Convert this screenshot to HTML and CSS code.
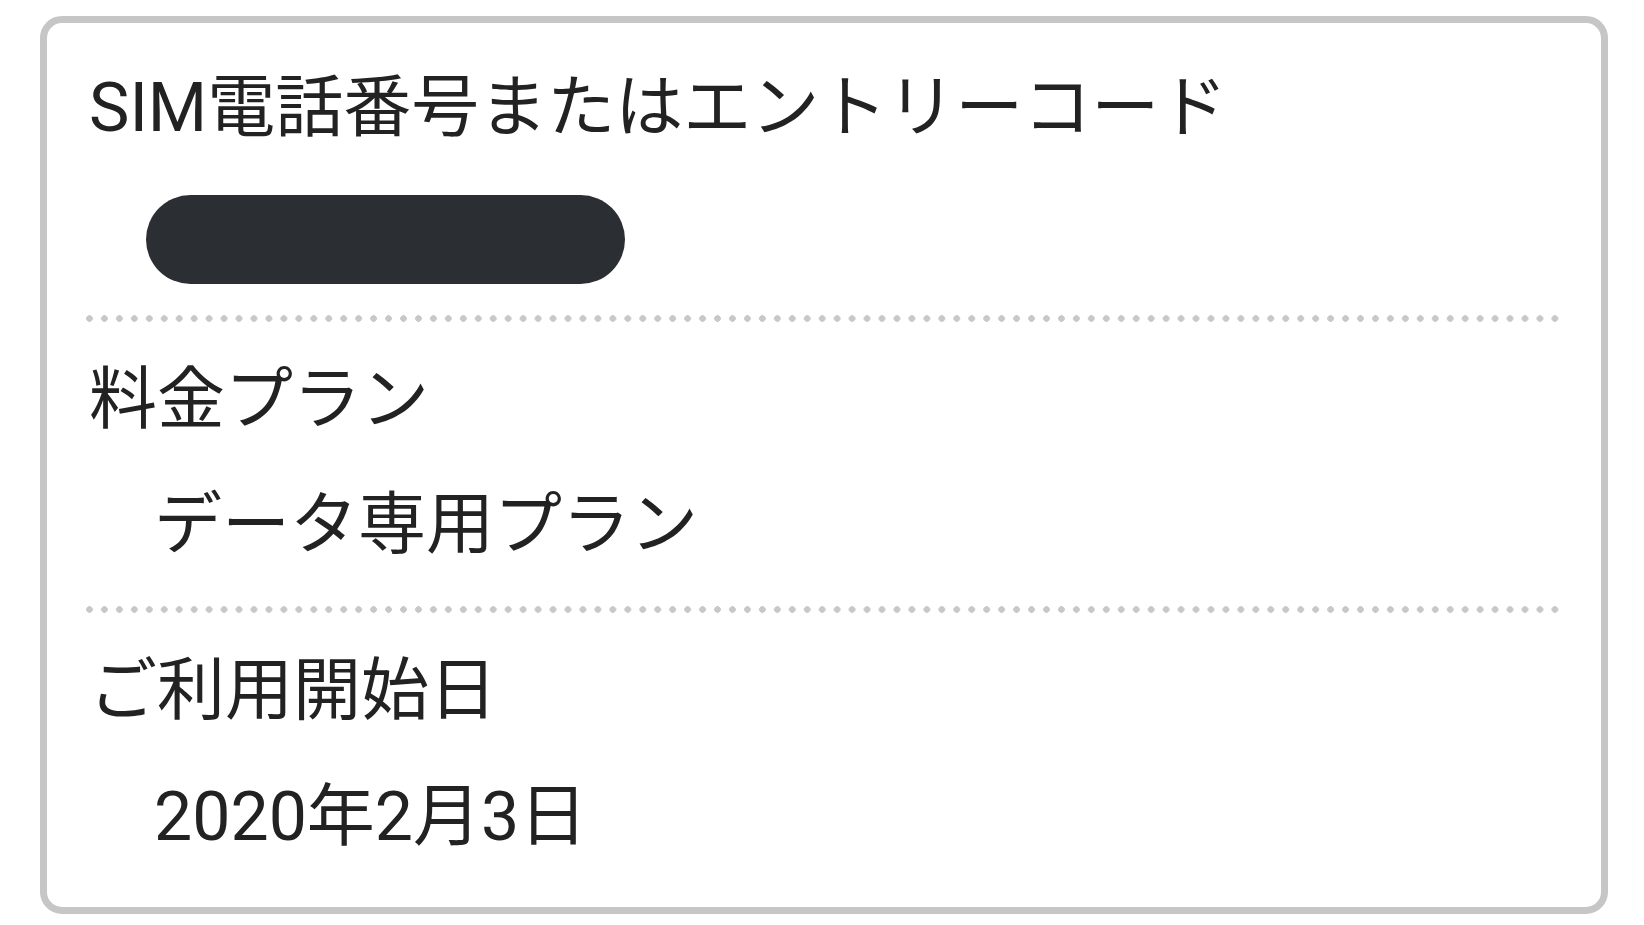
FILE: index.html
```html
<!DOCTYPE html>
<html lang="ja">
<head>
    <meta charset="UTF-8">
    <meta name="viewport" content="width=device-width, initial-scale=1.0">
    <title>ご契約内容</title>
    <link rel="stylesheet" href="styles.css">
</head>
<body>
    <div class="card">
        <div class="row row-first">
            <div class="label">SIM電話番号またはエントリーコード</div>
            <div class="value">
                <span class="mask"></span>
            </div>
        </div>

        <div class="dots"></div>

        <div class="row">
            <div class="label">料金プラン</div>
            <div class="value">データ専用プラン</div>
        </div>

        <div class="dots"></div>

        <div class="row row-last">
            <div class="label">ご利用開始日</div>
            <div class="value">2020年2月3日</div>
        </div>
    </div>
</body>
</html>
```

FILE: styles.css
```css
body {
    margin: 0;
    background-color: #fff;
    font-family: Roboto, "Noto Sans CJK JP", sans-serif;
    color: #222;
}

.card {
    box-sizing: border-box;
    width: 1568px;
    margin: 16px 0 0 40px;
    padding: 0 40px 0 42px;
    border: 7px solid #c6c6c6;
    border-radius: 22px;
}

.row {
    padding: 38px 0 36px;
}

.row-first {
    padding-top: 45px;
    padding-bottom: 31px;
}

.row-last {
    padding-top: 38px;
    padding-bottom: 45px;
}

.label {
    font-size: 68px;
    line-height: 80px;
}

.value {
    font-size: 68px;
    line-height: 90px;
    margin-top: 40px;
    padding-left: 65px;
}

.row-last .value {
    margin-top: 41px;
}

.row-first .value {
    margin-top: 47px;
    padding-left: 57px;
    line-height: 0;
}

/* phone number blacked out */
.mask {
    display: inline-block;
    width: 479px;
    height: 89px;
    border-radius: 45px;
    background-color: #2b2f33;
}

/* dotted divider between rows */
.dots {
    width: 1481px;
    height: 7px;
    margin-left: -7px;
    background-image: radial-gradient(circle, #c8c8c8 3px, rgba(200, 200, 200, 0) 3.6px);
    background-size: 15px 7px;
    background-repeat: round no-repeat;
}
```
